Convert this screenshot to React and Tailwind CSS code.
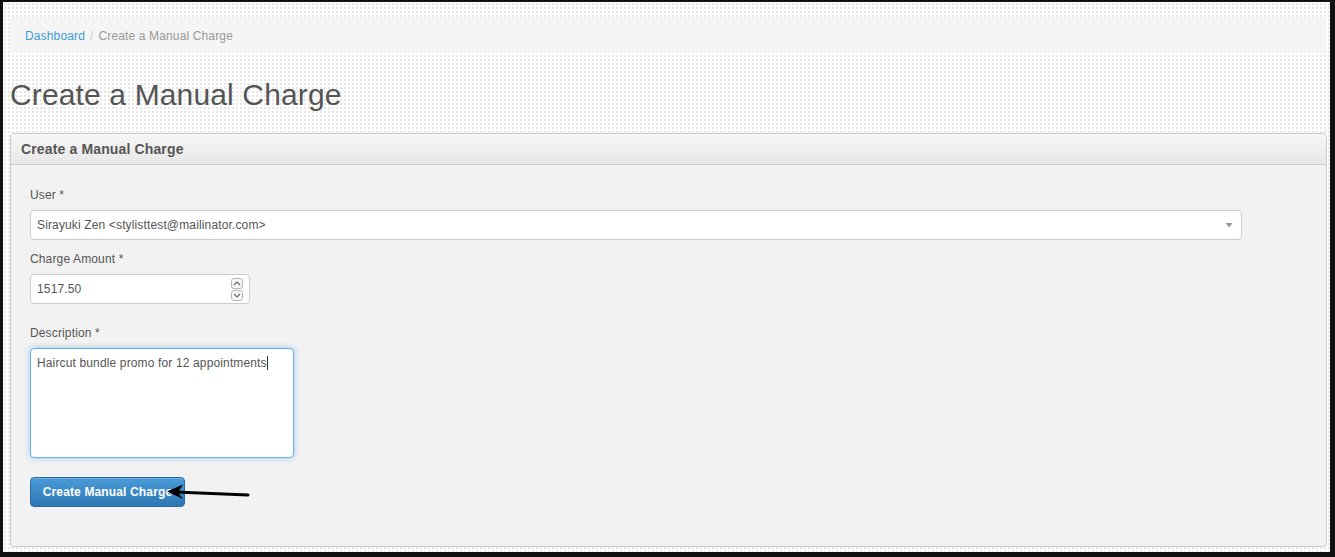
import React from 'react';

const SpinButton = ({ up }) => (
  <div className="w-[12px] h-[11px] rounded-[3px] border border-[#b5b5b5] bg-[#f7f7f7] flex items-center justify-center">
    <svg width="8" height="5" viewBox="0 0 8 5">
      <path d={up ? 'M1 4 L4 1 L7 4' : 'M1 1 L4 4 L7 1'} fill="none" stroke="#666" strokeWidth="1.1" />
    </svg>
  </div>
);

const App = () => {
  return (
    <div
      className="w-[1335px] h-[557px] overflow-hidden border-l-[3px] border-t-2 border-r-[5px] border-b-[5px] border-[#111] bg-white bg-[radial-gradient(#e6e6e6_0.8px,transparent_0.8px)] bg-[size:4px_4px] text-[#555] tracking-[0.14px]"
      style={{ fontFamily: '"Liberation Sans", Arial, sans-serif' }}
    >
      <div className="pl-[7px] pt-[15px]">
        {/* Breadcrumb */}
        <div className="w-[1316px] h-[36px] rounded-[4px] bg-[#f5f5f5] flex items-center px-[15px] pt-[2px] text-[12px]">
          <span className="text-[#3a9ad9]">Dashboard</span>
          <span className="text-[#ccc] px-[5px]">/</span>
          <span className="text-[#999]">Create a Manual Charge</span>
        </div>

        {/* Title */}
        <h1 className="mt-[25px] text-[30px] leading-[33px] text-[#555]">Create a Manual Charge</h1>

        {/* Panel */}
        <div className="mt-[22px] w-[1317px] h-[414px] border border-[#ccc] rounded-[4px] bg-[#f2f2f2] overflow-hidden">
          <div className="h-[31px] border-b border-[#ccc] bg-[linear-gradient(#f6f6f6,#e8e8e8)] flex items-center px-[10px]">
            <span className="text-[14px] font-bold text-[#555]">Create a Manual Charge</span>
          </div>

          <div className="pt-[22px] px-[19px] text-[12px]">
            <div className="leading-[17px]">User *</div>
            <div className="mt-[6px] w-[1212px] h-[30px] bg-white border border-[#ccc] rounded-[4px] flex items-center justify-between pl-[6px] pr-[8px]">
              <span>Sirayuki Zen &lt;stylisttest@mailinator.com&gt;</span>
              <svg width="8" height="6" viewBox="0 0 8 6">
                <path d="M0.5 1 L7.5 1 L4 5.5 Z" fill="#999" />
              </svg>
            </div>

            <div className="mt-[11px] leading-[17px]">Charge Amount *</div>
            <div className="mt-[6px] w-[220px] h-[30px] bg-white border border-[#ccc] rounded-[4px] flex items-center justify-between pl-[6px] pr-[6px]">
              <span>1517.50</span>
              <div className="flex flex-col gap-[1px]">
                <SpinButton up />
                <SpinButton />
              </div>
            </div>

            <div className="mt-[21px] leading-[17px]">Description *</div>
            <div className="mt-[6px] w-[264px] h-[110px] bg-white border border-[#66afe9] rounded-[4px] shadow-[0_0_6px_rgba(102,175,233,0.6)] px-[6px] pt-[6px] leading-[16px]">
              <span>Haircut bundle promo for 12 appointments</span>
              <span className="inline-block w-[1px] h-[14px] bg-[#333] align-[-3px]" />
            </div>

            <div className="relative mt-[19px] w-fit">
              <button className="w-[155px] h-[30px] rounded-[4px] border border-[#2b6aa3] bg-[linear-gradient(#4a9cd8,#2d76b4)] text-white font-bold text-[12px] shadow-[inset_0_1px_0_rgba(255,255,255,0.2)]">
                Create Manual Charge
              </button>
              <svg className="absolute left-[135px] top-[5px]" width="86" height="20" viewBox="0 0 86 20">
                <path d="M10 10 L83 13" stroke="#000" strokeWidth="3" strokeLinecap="round" />
                <path d="M2 9.5 L18 2.5 L13 10.5 L18 17 Z" fill="#000" />
              </svg>
            </div>
          </div>
        </div>
      </div>
    </div>
  );
};

export default App;
